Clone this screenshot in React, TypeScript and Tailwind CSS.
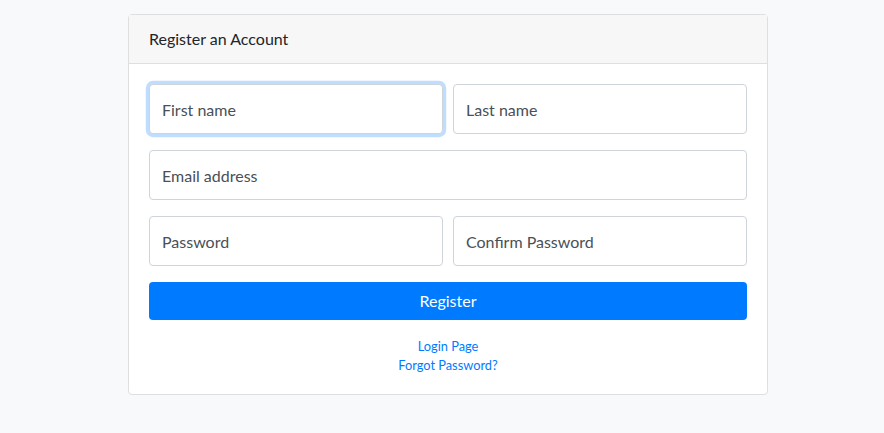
export default function App() {
  const field =
    'h-[50px] w-full rounded-[4px] border border-[#ced4da] bg-white px-3 text-base text-[#495057] placeholder:text-[#495057] outline-none';

  return (
    <div className="min-h-[433px] bg-[#f8f9fa] pt-[14px] font-['Lato',sans-serif]">
      <div className="ml-[128px] w-[640px] rounded-[4px] border border-[#dfdfdf] bg-white">
        <div className="border-b border-[#dfdfdf] bg-[#f7f7f7] px-5 py-3 text-base leading-6 text-[#212529]">
          Register an Account
        </div>
        <form className="px-5 pt-5 pb-[19px]" onSubmit={(e) => e.preventDefault()}>
          <div className="mb-4 grid grid-cols-2 gap-[10px]">
            <input
              autoFocus
              placeholder="First name"
              className={`${field} border-[#80bdff] shadow-[0_0_0_3.2px_rgba(0,123,255,0.25)]`}
            />
            <input placeholder="Last name" className={field} />
          </div>
          <div className="mb-4">
            <input placeholder="Email address" className={field} />
          </div>
          <div className="mb-4 grid grid-cols-2 gap-[10px]">
            <input type="password" placeholder="Password" className={field} />
            <input type="password" placeholder="Confirm Password" className={field} />
          </div>
          <button
            type="submit"
            className="h-[38px] w-full rounded-[4px] bg-[#007bff] text-base text-white"
          >
            Register
          </button>
          <div className="mt-[17px] text-center text-[12.8px] leading-[19.2px]">
            <a href="#" className="block text-[#007bff]">
              Login Page
            </a>
            <a href="#" className="block text-[#007bff]">
              Forgot Password?
            </a>
          </div>
        </form>
      </div>
    </div>
  );
}
